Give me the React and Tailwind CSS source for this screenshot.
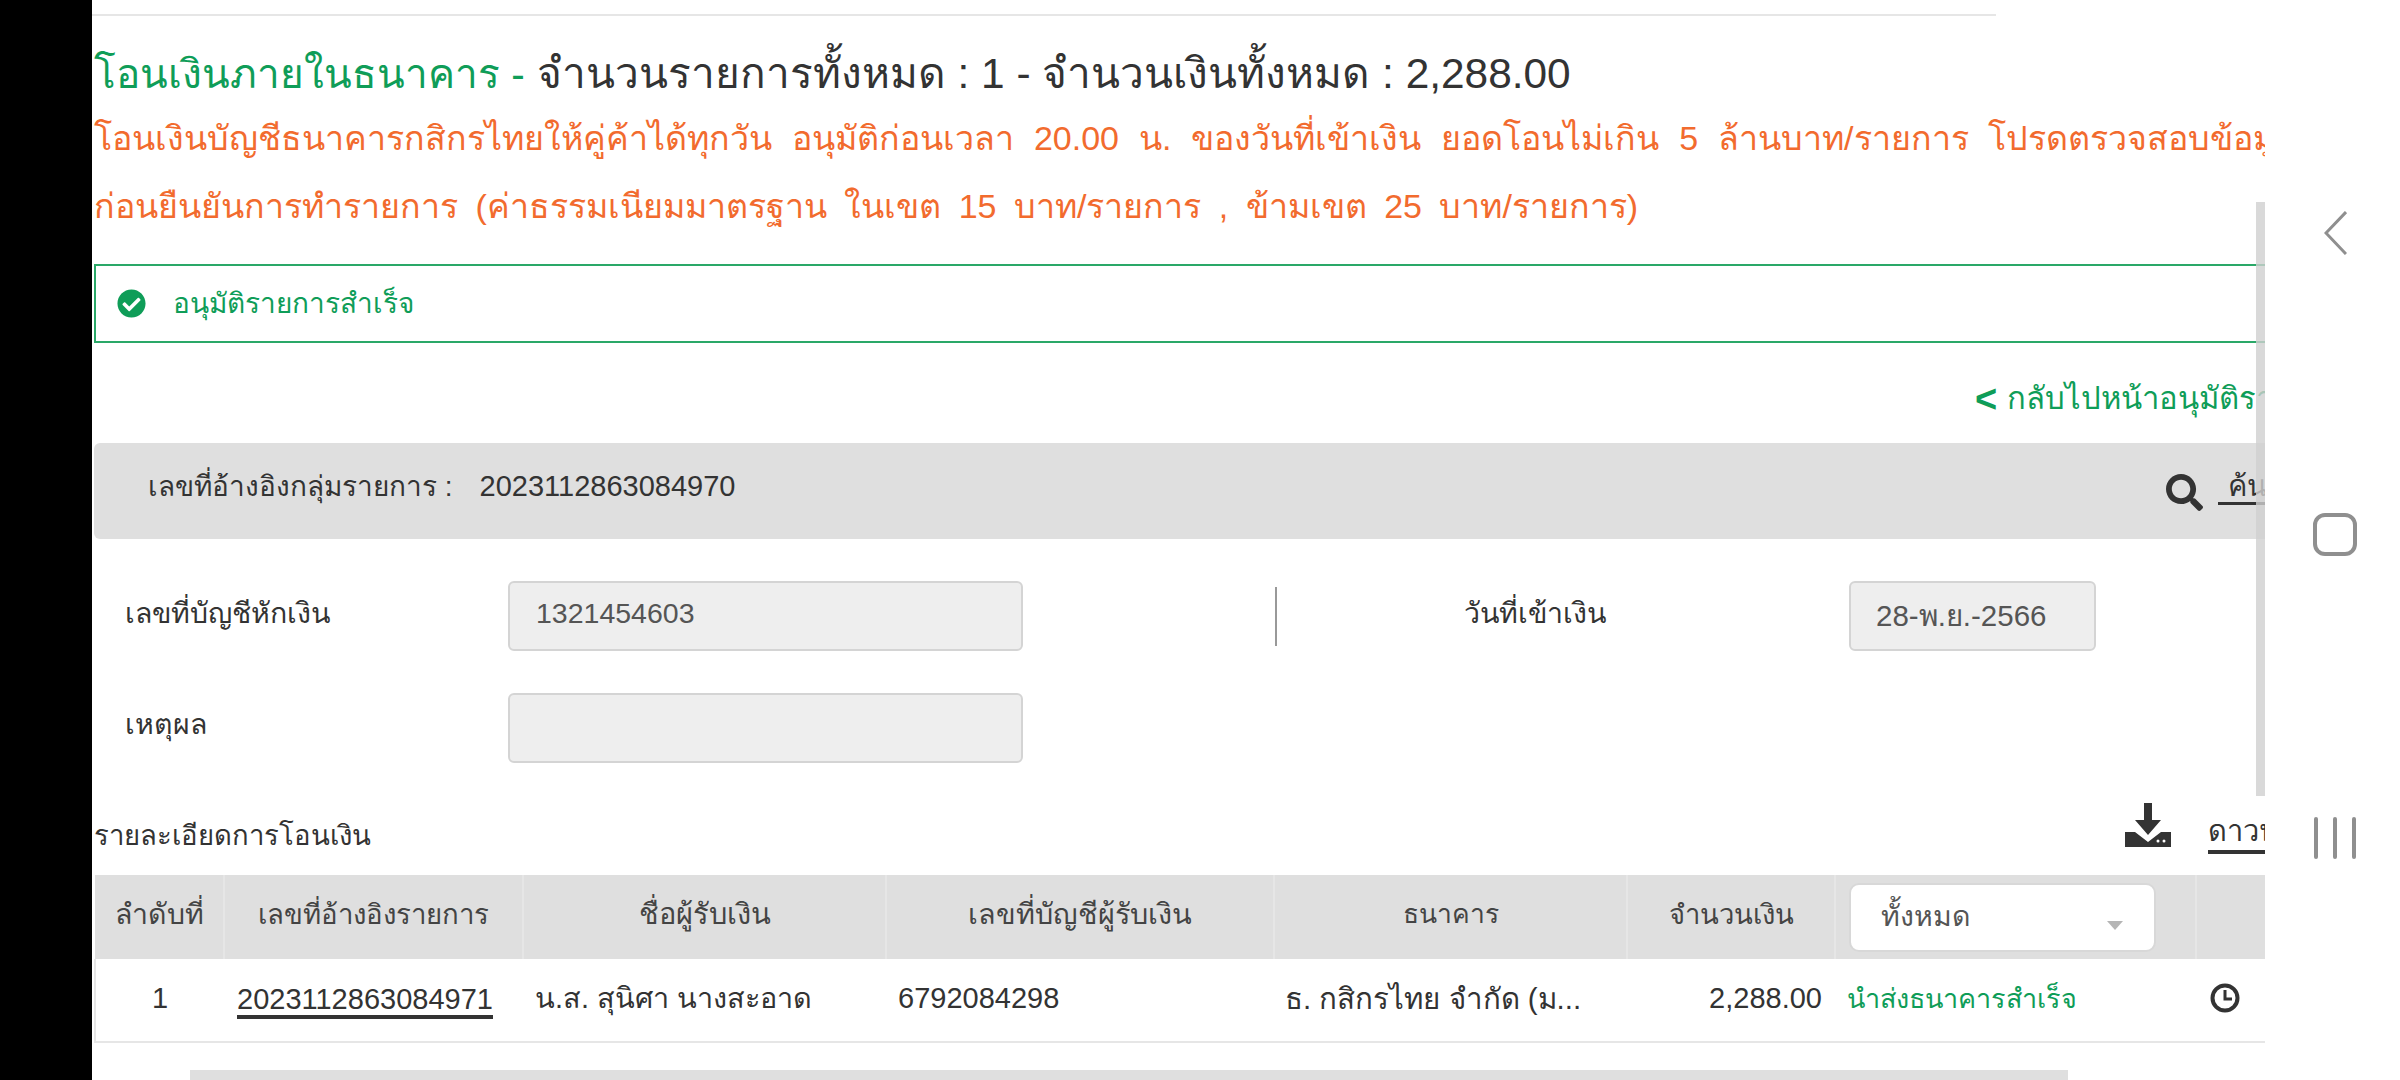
import { FaCheckCircle, FaSearch } from 'react-icons/fa'

const colWidths = [129, 299, 363, 388, 353, 208, 361, 70]
const headers = [
  ['ลำดับที่', 'text-[28.5px]'],
  ['เลขที่อ้างอิงรายการ', 'text-[27.6px]'],
  ['ชื่อผู้รับเงิน', 'text-[29px]'],
  ['เลขที่บัญชีผู้รับเงิน', 'text-[28.8px]'],
  ['ธนาคาร', 'text-[26.5px]'],
  ['จำนวนเงิน', 'text-[27.4px]'],
]

function DownloadIcon() {
  return (
    <svg viewBox="0 0 46 44" className="w-[46px] h-[44px] fill-[#333333]">
      <path d="M19 0h8v17h9L23 32 10 17h9z" />
      <path d="M0 29h10l13 10 13-10h10v15H0z" />
      <circle cx="33" cy="38" r="1.5" fill="#ffffff" />
      <circle cx="39" cy="38" r="1.5" fill="#ffffff" />
    </svg>
  )
}

function ClockIcon() {
  return (
    <svg viewBox="0 0 30 30" className="w-[30px] h-[30px] fill-none stroke-[#333333]">
      <circle cx="15" cy="15" r="12.5" strokeWidth="4" />
      <path d="M15 7v9h7" strokeWidth="3" />
    </svg>
  )
}

function NavBar() {
  return (
    <div className="flex-1 h-full bg-white flex flex-col items-center pt-[211px] pl-[5px]">
      <svg viewBox="0 0 23 44" className="w-[23px] h-[44px] fill-none stroke-[#8f8f8f] stroke-[3]">
        <path d="M22 1 2 22l20 21" />
      </svg>
      <div className="w-[44px] h-[43px] mt-[258px] rounded-[12px] border-[4px] border-[#8f8f8f]" />
      <div className="flex gap-[15px] mt-[261px]">
        <div className="w-[4px] h-[42px] bg-[#8f8f8f] rounded-full" />
        <div className="w-[4px] h-[42px] bg-[#8f8f8f] rounded-full" />
        <div className="w-[4px] h-[42px] bg-[#8f8f8f] rounded-full" />
      </div>
    </div>
  )
}

export default function App() {
  return (
    <div className="flex w-[2400px] h-[1080px] overflow-hidden bg-white text-[#333333] font-['Liberation_Sans','Noto_Sans_CJK_SC',sans-serif]">
      <div className="w-[92px] h-full bg-black shrink-0" />

      <div className="relative w-[2173px] h-full overflow-hidden shrink-0">
        {/* top rule */}
        <div className="h-[16px] w-[1904px] border-b-[2px] border-[#e6e6e6]" />

        <div className="w-[2400px] pl-[2px]">
          <div className="mt-[28px] h-[60px] flex items-center text-[42.4px] whitespace-nowrap">
            <span className="text-[#0f9d58] text-[40.5px] mr-[12px]">โอนเงินภายในธนาคาร -</span>
            <span>จำนวนรายการทั้งหมด : 1 - จำนวนเงินทั้งหมด : 2,288.00</span>
          </div>

          <div className="text-[#f26b2e] text-[34px] leading-[68px] whitespace-nowrap">
            <div className="[word-spacing:10.5px]">โอนเงินบัญชีธนาคารกสิกรไทยให้คู่ค้าได้ทุกวัน อนุมัติก่อนเวลา 20.00 น. ของวันที่เข้าเงิน ยอดโอนไม่เกิน 5 ล้านบาท/รายการ โปรดตรวจสอบข้อมูล</div>
            <div className="[word-spacing:8px]">ก่อนยืนยันการทำรายการ (ค่าธรรมเนียมมาตรฐาน ในเขต 15 บาท/รายการ , ข้ามเขต 25 บาท/รายการ)</div>
          </div>

          <div className="mt-[24px] h-[79px] border-[2px] border-[#2aa868] flex items-center pl-[21px] gap-[27px] text-[28px] text-[#0f9d58]">
            <FaCheckCircle className="text-[29px]" />
            <span>อนุมัติรายการสำเร็จ</span>
          </div>

          <div className="h-[100px] flex items-center pl-[1881px] pt-[12px] text-[31px] text-[#0f9d58] whitespace-nowrap">
            <span className="font-bold text-[38px] mr-[10px]">&lt;</span>
            <span>กลับไปหน้าอนุมัติรายการ</span>
          </div>

          <div className="h-[96px] bg-[#dfdfdf] rounded-[6px] flex items-center pl-[54px] pb-[8px] text-[29px]">
            <span className="text-[28px]">เลขที่อ้างอิงกลุ่มรายการ :</span>
            <span className="ml-[27px]">2023112863084970</span>
            <FaSearch className="ml-auto text-[37px] shrink-0 mt-[10px]" />
            <span className="ml-[15px] mr-[190px] pl-[10px] border-b-[3px] border-[#333333] leading-[32px] whitespace-nowrap">ค้นหา</span>
          </div>

          <div className="mt-[42px] flex h-[70px] items-center text-[28.5px]">
            <label className="w-[414px] pl-[31px] pb-[6px]">เลขที่บัญชีหักเงิน</label>
            <div className="w-[515px] h-[70px] flex items-center pl-[26px] pb-[5px] bg-[#eeeeee] border-[2px] border-[#d4d4d4] rounded-[6px] text-[#555555]">1321454603</div>
            <div className="ml-[252px] w-[2px] h-[59px] bg-[#999999]" />
            <label className="ml-[187px] w-[385px] pb-[6px]">วันที่เข้าเงิน</label>
            <div className="w-[247px] h-[70px] flex items-center pl-[25px] pt-[1px] bg-[#eeeeee] border-[2px] border-[#d4d4d4] rounded-[6px] text-[#555555] text-[29.5px]">28-พ.ย.-2566</div>
          </div>

          <div className="mt-[42px] flex h-[70px] items-center text-[28.5px]">
            <label className="w-[414px] pl-[31px] pb-[7px]">เหตุผล</label>
            <div className="w-[515px] h-[70px] bg-[#eeeeee] border-[2px] border-[#d4d4d4] rounded-[6px]" />
          </div>

          <div className="mt-[40px] h-[44px] flex items-center text-[27.5px] whitespace-nowrap">
            <span className="pt-[22px]">รายละเอียดการโอนเงิน</span>
            <div className="ml-auto flex items-center">
              <DownloadIcon />
            </div>
            <span className="ml-[37px] mr-[141px] mt-[16px] text-[29px] border-b-[4px] border-[#333333] leading-[38px]">ดาวน์โหลด</span>
          </div>

          <table className="mt-[28px] table-fixed border-collapse w-[2171px]">
            <colgroup>
              {colWidths.map((w, i) => <col key={i} style={{ width: w }} />)}
            </colgroup>
            <thead>
              <tr className="h-[84px] bg-[#dfdfdf] text-[#444444]">
                {headers.map(([h, size]) => (
                  <th key={h} className={`font-normal text-center pb-[5px] border-r-[2px] border-[#e6e6e6] whitespace-nowrap ${size}`}>{h}</th>
                ))}
                <th className="font-normal pl-[13px] text-left border-r-[2px] border-[#e6e6e6]">
                  <div className="relative w-[307px] h-[69px] flex items-center pl-[30px] pb-[2px] bg-white border-[2px] border-[#d8d8d8] rounded-[10px] text-[#555555] text-[28.5px]">
                    ทั้งหมด
                    <svg viewBox="0 0 16 9" className="absolute right-[31px] top-[36px] w-[16px] h-[9px] fill-[#b5b5b5]">
                      <path d="M0 0h16L8 9z" />
                    </svg>
                  </div>
                </th>
                <th />
              </tr>
            </thead>
            <tbody>
              <tr className="h-[83px] text-[29px] border-b-[2px] border-l-[2px] border-[#e6e6e6]">
                <td className="text-center pb-[2px]">1</td>
                <td className="pl-[13px]"><span className="border-b-[4px] border-[#333333] leading-[32px] inline-block">2023112863084971</span></td>
                <td className="pl-[12px] pb-[2px] whitespace-nowrap text-[28.8px]">น.ส. สุนิศา นางสะอาด</td>
                <td className="pl-[12px] pb-[2px]">6792084298</td>
                <td className="pl-[11px] pb-[2px] whitespace-nowrap text-[29.5px]">ธ. กสิกรไทย จำกัด (ม...</td>
                <td className="text-right pr-[13px] pb-[2px]">2,288.00</td>
                <td className="pl-[12px] pb-[2px] text-[27px] text-[#0f9d58] whitespace-nowrap">นำส่งธนาคารสำเร็จ</td>
                <td className="pl-[14px] pb-[5px]"><ClockIcon /></td>
              </tr>
            </tbody>
          </table>

          <div className="mt-[27px] ml-[96px] w-[1878px] h-[20px] bg-[#dfdfdf]" />
        </div>

        {/* scrollbar overlay */}
        <div className="absolute right-0 top-[202px] w-[9px] h-[594px] bg-[#d0d0d0]/80" />
      </div>

      <NavBar />
    </div>
  )
}
